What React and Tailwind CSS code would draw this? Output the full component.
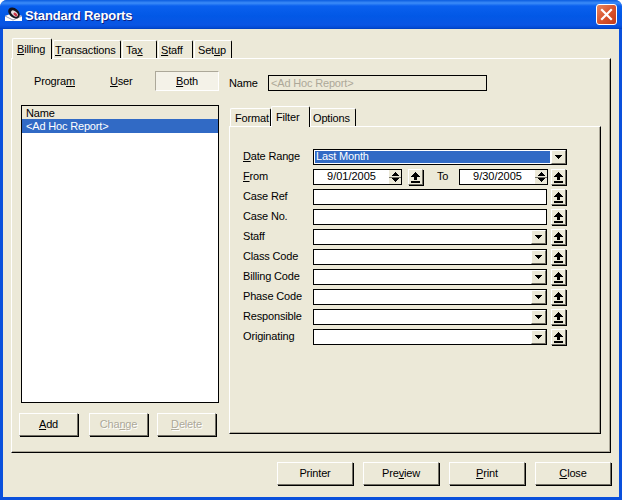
const raised = "border border-t-white border-l-white border-r-[#716f64] border-b-[#716f64] shadow-[1px_1px_0_#000]";

function ArrowUp() {
  return (
    <svg width="9" height="11" viewBox="0 0 9 11" shapeRendering="crispEdges">
      <path d="M4 0h1v1h1v1h1v1h1v1h1v1H6v3H3V5H0V4h1V3h1V2h1V1h1z" fill="#000" />
      <rect x="0" y="9" width="9" height="2" fill="#000" />
    </svg>
  );
}

function UpButton() {
  return (
    <button className={`flex h-4 w-[15px] shrink-0 items-center justify-center bg-[#ece9d8] ${raised}`}>
      <ArrowUp />
    </button>
  );
}

function Spinner() {
  return (
    <div className="flex w-[12px] shrink-0 flex-col items-center justify-between bg-[#ece9d8] py-[2px]">
      <svg width="7" height="4" viewBox="0 0 7 4" shapeRendering="crispEdges"><path d="M3 0h1v1h1v1h1v1h1v1H0V3h1V2h1V1h1z" fill="#000" /></svg>
      <div className="h-px w-full bg-[#716f64]" />
      <svg width="7" height="4" viewBox="0 0 7 4" shapeRendering="crispEdges"><path d="M0 0h7v1H6v1H5v1H4v1H3V3H2V2H1V1H0z" fill="#000" /></svg>
    </div>
  );
}

function DateInput({ value }) {
  return (
    <div className="flex h-4 w-[89px] shrink-0 border border-black bg-white">
      <span className="flex-1 text-center leading-[13px] tracking-normal">{value}</span>
      <Spinner />
    </div>
  );
}

function Combo({ value, selected, className = "" }) {
  return (
    <div className={`flex h-4 min-w-0 flex-1 border border-black bg-white ${className}`}>
      <div className={`m-px flex-1 pl-px leading-[11px] ${selected ? "bg-[#316ac5] text-white" : ""}`}>{value}</div>
      <button className={`flex h-[14px] w-[15px] shrink-0 items-center justify-center bg-[#ece9d8] ${raised}`}>
        <svg width="7" height="4" viewBox="0 0 7 4" shapeRendering="crispEdges"><path d="M0 0h7v1H6v1H5v1H4v1H3V3H2V2H1V1H0z" fill="#000" /></svg>
      </button>
    </div>
  );
}

function FilterRow({ label, children }) {
  return (
    <div className="flex h-4 items-center">
      <span className="-mt-[2px] w-[70px] shrink-0">{label}</span>
      {children}
    </div>
  );
}

function ComboRow({ label }) {
  return (
    <FilterRow label={label}>
      <Combo />
      <div className="ml-[4px]"><UpButton /></div>
    </FilterRow>
  );
}

function TextRow({ label }) {
  return (
    <FilterRow label={label}>
      <div className="h-4 flex-1 border border-black bg-white" />
      <div className="ml-[4px]"><UpButton /></div>
    </FilterRow>
  );
}

function Tab({ children, active, width, pad }) {
  return (
    <div
      style={{ width, paddingLeft: pad }}
      className={`whitespace-nowrap rounded-t-[2px] border-t border-l border-r border-t-white border-l-white border-r-black bg-[#ece9d8] ${
        active ? "relative z-10 -mb-px h-[21px] pt-[2px]" : "h-[18px] pt-px"
      }`}
    >
      {children}
    </div>
  );
}

function ActionButton({ children, width, disabled, className = "" }) {
  return (
    <button
      style={{ width }}
      className={`h-[23px] bg-[#ece9d8] ${raised} ${disabled ? "text-[#aca899] [text-shadow:1px_1px_0_#fff]" : "text-black"} ${className}`}
    >
      {children}
    </button>
  );
}

export default function App() {
  return (
    <div className="flex h-[500px] w-[622px] flex-col overflow-hidden rounded-t-[7px] bg-[#0a50dc] font-['Liberation_Sans',Arial,sans-serif] text-[11px] tracking-[-0.17px] text-black">
      <div className="flex h-[29px] shrink-0 items-center bg-[linear-gradient(to_bottom,#0a5ce0_0px,#3c8cf8_3px,#0a60ee_6px,#0258e6_16px,#0a55e4_25px,#0349d2_28px,#003cb8_29px)] pl-[5px] pr-[5px]">
        <svg width="18" height="15" viewBox="0 0 18 15" className="shrink-0">
          <path d="M0 9l8-3 9 3v5H0z" fill="#fff" />
          <path d="M0 9l8 4 9-4" fill="none" stroke="#9a9ab0" strokeWidth="1" />
          <ellipse cx="9" cy="6" rx="6.5" ry="4.5" transform="rotate(40 9 6)" fill="#15151f" />
          <ellipse cx="9.5" cy="6.5" rx="4" ry="2.2" transform="rotate(40 9.5 6.5)" fill="#e8dfe0" />
          <ellipse cx="10.5" cy="7.5" rx="2.4" ry="1.3" transform="rotate(40 10.5 7.5)" fill="#c9354a" />
        </svg>
        <span className="ml-[2px] mt-[2px] text-[13px] font-bold leading-none tracking-[-0.1px] text-white [text-shadow:1px_1px_0_#0f1f80]">Standard Reports</span>
        <button className="ml-auto flex h-[21px] w-[21px] items-center justify-center rounded-[3px] border border-white bg-gradient-to-br from-[#e8855f] via-[#d9552e] to-[#c23a1a]">
          <svg width="13" height="13" viewBox="0 0 13 13"><path d="M2 2l9 9M11 2l-9 9" stroke="#fff" strokeWidth="2.2" strokeLinecap="square" /></svg>
        </button>
      </div>

      <div className="mx-[3px] mb-[3px] flex flex-1 flex-col bg-[#ece9d8] px-[8px] pt-[9px]">
        <div className="flex items-end pl-px">
          <Tab active width={40} pad={4}><u>B</u>illing</Tab>
          <div className="ml-px flex gap-px">
            <Tab width={68} pad={1}><u>T</u>ransactions</Tab>
            <Tab width={35} pad={3}>Ta<u>x</u></Tab>
            <Tab width={35} pad={2}><u>S</u>taff</Tab>
            <Tab width={38} pad={3}>Set<u>u</u>p</Tab>
          </div>
        </div>

        <div className="h-[395px] border border-t-white border-l-white border-r-black border-b-black pt-[12px] shadow-[inset_-1px_-1px_0_#aca899]">
          <div className="flex h-[20px] items-center">
            <span className="ml-[22px] w-[76px]">Progra<u>m</u></span>
            <span className="w-[45px]"><u>U</u>ser</span>
            <div className="flex h-[20px] w-[64px] items-center justify-center border border-t-[#aca899] border-l-[#aca899] border-r-white border-b-white bg-[#f4f2e8]">
              <span><u>B</u>oth</span>
            </div>
            <span className="ml-[10px] w-[39px] pt-[4px]">Name</span>
            <div className="mt-[4px] h-4 w-[219px] border border-black pl-[2px] leading-[14px] text-[#aca899]">&lt;Ad Hoc Report&gt;</div>
          </div>

          <div className="mt-[14px] flex">
            <div className="ml-[9px] w-[198px]">
              <div className="h-[298px] border border-black bg-white">
                <div className="h-[13px] bg-[#ece9d8] pl-[4px] pt-px leading-[13px]">Name</div>
                <div className="h-[14px] bg-[#316ac5] pl-[4px] leading-[14px] text-white">&lt;Ad Hoc Report&gt;</div>
              </div>
              <div className="mt-[10px] flex">
                <div className="-ml-[2px]"><ActionButton width={59}><u>A</u>dd</ActionButton></div>
                <ActionButton width={59} disabled className="ml-[11px]">Cha<u>n</u>ge</ActionButton>
                <ActionButton width={59} disabled className="ml-[9px]"><u>D</u>elete</ActionButton>
              </div>
            </div>

            <div className="ml-[10px] w-[372px]">
              <div className="flex h-[21px] items-end pl-px">
                <Tab width={41} pad={4}>Format</Tab>
                <Tab active width={39} pad={4}>Filter</Tab>
                <Tab width={46} pad={2}>Options</Tab>
              </div>
              <div className="flex h-[308px] flex-col gap-1 border border-t-white border-l-white border-r-black border-b-black pl-[13px] pr-[34px] pt-[22px] shadow-[inset_-1px_-1px_0_#aca899]">
                <FilterRow label={<><u>D</u>ate Range</>}>
                  <Combo value="Last Month" selected className="-mr-px" />
                </FilterRow>
                <FilterRow label={<><u>F</u>rom</>}>
                  <DateInput value="9/01/2005" />
                  <div className="ml-[6px]"><UpButton /></div>
                  <span className="-mt-[2px] ml-[14px] w-[22px]">To</span>
                  <DateInput value="9/30/2005" />
                  <div className="ml-[3px]"><UpButton /></div>
                </FilterRow>
                <TextRow label="Case Ref" />
                <TextRow label="Case No." />
                <ComboRow label="Staff" />
                <ComboRow label="Class Code" />
                <ComboRow label="Billing Code" />
                <ComboRow label="Phase Code" />
                <ComboRow label="Responsible" />
                <ComboRow label="Originating" />
              </div>
            </div>
          </div>
        </div>

        <div className="mt-[9px] flex justify-end">
          <ActionButton width={76}>Printer</ActionButton>
          <ActionButton width={76} className="ml-[10px]">Pre<u>v</u>iew</ActionButton>
          <ActionButton width={76} className="ml-[10px]"><u>P</u>rint</ActionButton>
          <ActionButton width={76} className="ml-[10px]"><u>C</u>lose</ActionButton>
        </div>
      </div>
    </div>
  );
}
